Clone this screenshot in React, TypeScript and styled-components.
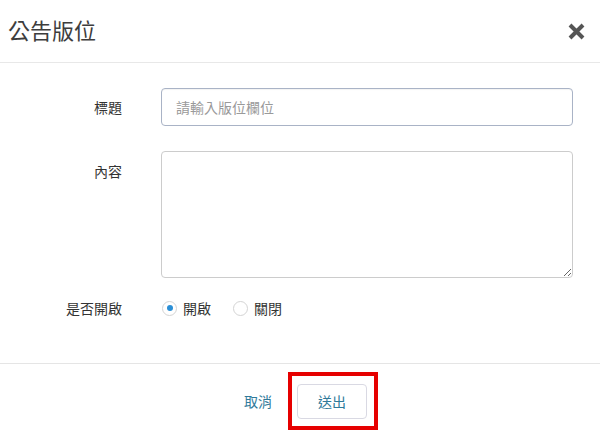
import styled, { createGlobalStyle } from "styled-components";

const GlobalStyle = createGlobalStyle`
  html, body {
    margin: 0;
    padding: 0;
    background: #ffffff;
  }
  body {
    font-family: "Noto Sans CJK TC", "Noto Sans", sans-serif;
    color: #333333;
  }
  * {
    box-sizing: border-box;
  }
`;

const Modal = styled.div`
  width: 600px;
  height: 434px;
  background: #ffffff;
  display: flex;
  flex-direction: column;
`;

const Header = styled.header`
  height: 63px;
  padding: 0 13px 0 8px;
  display: flex;
  align-items: center;
  justify-content: space-between;
  border-bottom: 1px solid #e8e8e8;
`;

const Title = styled.h4`
  margin: 0 0 4px;
  font-size: 22px;
  font-weight: 400;
  line-height: 1;
  color: #3d3d3d;
`;

const Close = styled.button`
  border: 0;
  background: none;
  padding: 0;
  width: 22px;
  height: 22px;
  display: flex;
  align-items: center;
  justify-content: center;
  cursor: pointer;
  margin-top: 1px;
`;

const Body = styled.div`
  flex: 1;
  padding: 25px 27px 0 0;
  display: flex;
  flex-direction: column;
`;

const Row = styled.div<{ $top?: boolean; $space?: number }>`
  display: grid;
  grid-template-columns: 122px 1fr;
  column-gap: 39px;
  align-items: ${(p) => (p.$top ? "start" : "center")};
  margin-top: ${(p) => p.$space ?? 0}px;
`;

const Label = styled.label<{ $top?: boolean }>`
  text-align: right;
  font-size: 14px;
  color: #333333;
  line-height: 20px;
  padding-top: ${(p) => (p.$top ? "10px" : "0")};
`;

const Input = styled.input`
  width: 100%;
  height: 38px;
  padding: 0 14px;
  font-family: inherit;
  font-size: 14px;
  color: #333;
  border: 1px solid #a9b3c6;
  border-radius: 4px;
  outline: none;
  box-shadow: inset 0 1px 1px rgba(0, 0, 0, 0.05);
  &::placeholder {
    color: #9a9a9a;
  }
`;

const TextArea = styled.textarea`
  width: 100%;
  height: 127px;
  padding: 8px 12px;
  font-family: inherit;
  font-size: 14px;
  border: 1px solid #cccccc;
  border-radius: 4px;
  outline: none;
  resize: vertical;
  display: block;
`;

const Radios = styled.div`
  display: flex;
  align-items: center;
  gap: 21px;
`;

const RadioOption = styled.label`
  display: flex;
  align-items: center;
  gap: 6px;
  font-size: 14px;
  line-height: 20px;
  color: #333;
  cursor: pointer;
`;

const RadioCircle = styled.span<{ $checked?: boolean }>`
  width: 15px;
  height: 15px;
  border-radius: 50%;
  border: 1px solid #d4d4d4;
  background: #fff;
  display: flex;
  align-items: center;
  justify-content: center;
  margin-left: 1px;
  &::after {
    content: "";
    width: 6px;
    height: 6px;
    border-radius: 50%;
    background: ${(p) => (p.$checked ? "#2b8fd6" : "transparent")};
  }
`;

const Footer = styled.footer`
  height: 71px;
  border-top: 1px solid #e5e5e5;
  display: flex;
  align-items: center;
  justify-content: center;
  gap: 16px;
  padding: 0 0 6px 22px;
`;

const LinkButton = styled.button`
  border: 0;
  background: none;
  font-family: inherit;
  font-size: 14px;
  color: #2f7a9a;
  padding: 0;
  margin-top: 9px;
  cursor: pointer;
`;

const Highlight = styled.span`
  display: inline-flex;
  border: 4px solid #e60000;
  padding: 8px 7px 7px 5px;
  margin-top: 9px;
`;

const SubmitButton = styled.button`
  width: 70px;
  height: 35px;
  border: 1px solid #d9d9e3;
  border-radius: 4px;
  background: #fff;
  font-family: inherit;
  font-size: 14px;
  color: #2f7a9a;
  cursor: pointer;
`;

export default function App() {
  return (
    <>
      <GlobalStyle />
      <Modal>
        <Header>
          <Title>公告版位</Title>
          <Close aria-label="close">
            <svg width="19" height="19" viewBox="0 0 19 19">
              <path
                d="M3 3 L16 16 M16 3 L3 16"
                stroke="#555555"
                strokeWidth="4"
                strokeLinecap="butt"
              />
            </svg>
          </Close>
        </Header>
        <Body>
          <Row>
            <Label>標題</Label>
            <Input placeholder="請輸入版位欄位" />
          </Row>
          <Row $top $space={25}>
            <Label $top>內容</Label>
            <TextArea />
          </Row>
          <Row $space={20}>
            <Label>是否開啟</Label>
            <Radios>
              <RadioOption>
                <RadioCircle $checked />
                開啟
              </RadioOption>
              <RadioOption>
                <RadioCircle />
                關閉
              </RadioOption>
            </Radios>
          </Row>
        </Body>
        <Footer>
          <LinkButton>取消</LinkButton>
          <Highlight>
            <SubmitButton>送出</SubmitButton>
          </Highlight>
        </Footer>
      </Modal>
    </>
  );
}
